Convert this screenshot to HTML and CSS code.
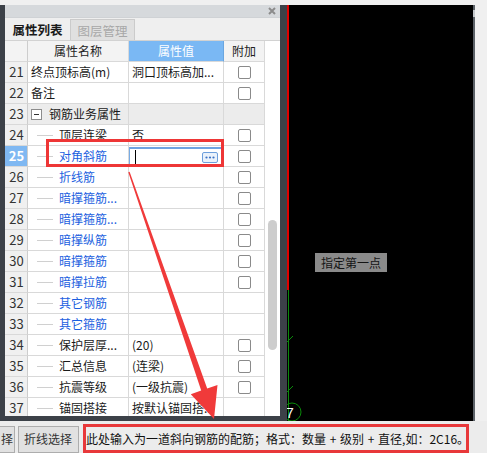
FILE: index.html
```html
<!DOCTYPE html>
<html>
<head>
<meta charset="utf-8">
<link rel="stylesheet" href="styles.css">
</head>
<body>
<div class="app">
  <div class="topstrip"></div>
  <div class="main">
    <div class="panel">
      <div class="titlebar">
        <svg class="close" width="8" height="8" viewBox="0 0 8 8"><path d="M1 1L7 7M7 1L1 7" stroke="#8c8c8c" stroke-width="2"/></svg>
      </div>
      <div class="tabs">
        <div class="tab active">属性列表</div>
        <div class="tab">图层管理</div>
      </div>
      <div class="body">
        <div class="grid">
          <div class="row hd">
            <div class="c num"></div>
            <div class="c hname">属性名称</div>
            <div class="c hval">属性值</div>
            <div class="c hadd">附加</div>
          </div>
          <div class="row">
            <div class="c num">21</div>
            <div class="c name">终点顶标高(m)</div>
            <div class="c val">洞口顶标高加...</div>
            <div class="c add"><span class="cb"></span></div>
          </div>
          <div class="row">
            <div class="c num">22</div>
            <div class="c name">备注</div>
            <div class="c val"></div>
            <div class="c add"><span class="cb"></span></div>
          </div>
          <div class="row grp">
            <div class="c num">23</div>
            <div class="c name"><span class="tog"></span>钢筋业务属性</div>
            <div class="c val"></div>
            <div class="c add"></div>
          </div>
          <div class="row">
            <div class="c num">24</div>
            <div class="c name"><span class="tree"></span>顶层连梁</div>
            <div class="c val">否</div>
            <div class="c add"><span class="cb"></span></div>
          </div>
          <div class="row">
            <div class="c num sel">25</div>
            <div class="c name blue"><span class="tree"></span>对角斜筋</div>
            <div class="c val editing">
              <div class="edit">
                <span class="caret"></span>
                <span class="dots"><svg width="14" height="9" viewBox="0 0 14 9"><circle cx="3.5" cy="4.5" r="1.1" fill="#3d72c4"/><circle cx="7" cy="4.5" r="1.1" fill="#3d72c4"/><circle cx="10.5" cy="4.5" r="1.1" fill="#3d72c4"/></svg></span>
              </div>
            </div>
            <div class="c add"><span class="cb"></span></div>
          </div>
          <div class="row">
            <div class="c num">26</div>
            <div class="c name blue"><span class="tree"></span>折线筋</div>
            <div class="c val"></div>
            <div class="c add"><span class="cb"></span></div>
          </div>
          <div class="row">
            <div class="c num">27</div>
            <div class="c name blue"><span class="tree"></span>暗撑箍筋...</div>
            <div class="c val"></div>
            <div class="c add"><span class="cb"></span></div>
          </div>
          <div class="row">
            <div class="c num">28</div>
            <div class="c name blue"><span class="tree"></span>暗撑箍筋...</div>
            <div class="c val"></div>
            <div class="c add"><span class="cb"></span></div>
          </div>
          <div class="row">
            <div class="c num">29</div>
            <div class="c name blue"><span class="tree"></span>暗撑纵筋</div>
            <div class="c val"></div>
            <div class="c add"><span class="cb"></span></div>
          </div>
          <div class="row">
            <div class="c num">30</div>
            <div class="c name blue"><span class="tree"></span>暗撑箍筋</div>
            <div class="c val"></div>
            <div class="c add"><span class="cb"></span></div>
          </div>
          <div class="row">
            <div class="c num">31</div>
            <div class="c name blue"><span class="tree"></span>暗撑拉筋</div>
            <div class="c val"></div>
            <div class="c add"><span class="cb"></span></div>
          </div>
          <div class="row">
            <div class="c num">32</div>
            <div class="c name blue"><span class="tree"></span>其它钢筋</div>
            <div class="c val"></div>
            <div class="c add"></div>
          </div>
          <div class="row">
            <div class="c num">33</div>
            <div class="c name blue"><span class="tree"></span>其它箍筋</div>
            <div class="c val"></div>
            <div class="c add"></div>
          </div>
          <div class="row">
            <div class="c num">34</div>
            <div class="c name"><span class="tree"></span>保护层厚...</div>
            <div class="c val">(20)</div>
            <div class="c add"><span class="cb"></span></div>
          </div>
          <div class="row">
            <div class="c num">35</div>
            <div class="c name"><span class="tree"></span>汇总信息</div>
            <div class="c val">(连梁)</div>
            <div class="c add"><span class="cb"></span></div>
          </div>
          <div class="row">
            <div class="c num">36</div>
            <div class="c name"><span class="tree"></span>抗震等级</div>
            <div class="c val">(一级抗震)</div>
            <div class="c add"><span class="cb"></span></div>
          </div>
          <div class="row">
            <div class="c num">37</div>
            <div class="c name"><span class="tree"></span>锚固搭接</div>
            <div class="c val">按默认锚固搭...</div>
            <div class="c add"></div>
          </div>
        </div>
        <div class="scroll"><div class="thumb"></div></div>
      </div>
    </div>
    <div class="canvas">
      <svg class="drawing" width="186" height="416" viewBox="0 0 186 416">
        <line x1="1" y1="0" x2="1" y2="285" stroke="#e00000" stroke-width="2"/>
        <line x1="1.5" y1="285" x2="1.5" y2="416" stroke="#0a8a0a" stroke-width="1"/>
        <line x1="0" y1="337" x2="6" y2="331" stroke="#0a8a0a" stroke-width="1"/>
        <line x1="0" y1="387" x2="6" y2="381" stroke="#0a8a0a" stroke-width="1"/>
        <circle cx="5" cy="407" r="9" fill="none" stroke="#0a8a0a" stroke-width="1"/>
        <text x="-1" y="413" fill="#ffffff" font-size="14" font-family="Liberation Sans, sans-serif">7</text>
      </svg>
      <div class="hint">指定第一点</div>
    </div>
    <div class="vscroll"><div class="vthumb"></div></div>
    <div class="rightstrip"></div>
  </div>
  <div class="status">
    <div class="btn cut">择</div>
    <div class="btn">折线选择</div>
    <div class="msg"><span class="msgtext">此处输入为一道斜向钢筋的配筋；格式：数量 + 级别 + 直径,如：2C16。</span></div>
  </div>
  <div class="highlight"></div>
  <svg class="arrow" width="487" height="453" viewBox="0 0 487 453">
    <polygon points="128.3,172.2 129.6,171.8 207.2,388.6 217.5,385 214,419 190.8,394.2 201.2,390.6" fill="#f03a3a"/>
  </svg>
</div>
</body>
</html>
```

FILE: styles.css
```css
html, body {
  margin: 0;
  padding: 0;
}
body {
  width: 487px;
  height: 453px;
  overflow: hidden;
  background: #f0f0f0;
  font-family: "Noto Sans CJK SC", "Microsoft YaHei", sans-serif;
  font-size: 12px;
  color: #1a1a1a;
}
.app {
  position: relative;
  width: 487px;
  height: 453px;
  overflow: hidden;
}
.topstrip {
  height: 5px;
  background: #f0f0f0;
}
.main {
  display: flex;
  height: 416px;
}
.panel {
  width: 275px;
  height: 411px;
  border-left: 5px solid #3c4148;
  border-right: 7px solid #3c4148;
  border-bottom: 5px solid #3c4148;
  display: flex;
  flex-direction: column;
  background: #fff;
  flex: none;
}
.titlebar {
  height: 12px;
  background: #d6d9dc;
  display: flex;
  justify-content: flex-end;
  align-items: center;
  padding-right: 4px;
  flex: none;
}
.close {
  display: block;
}
.tabs {
  height: 23px;
  box-sizing: border-box;
  background: #efefef;
  display: flex;
  align-items: flex-end;
  border-top: 1px solid #cfd2d5;
  flex: none;
}
.tab {
  width: 65px;
  height: 21px;
  box-sizing: border-box;
  display: flex;
  align-items: center;
  justify-content: center;
  font-size: 12.5px;
  color: #a8a8a8;
  background: #e0e0e0;
  border: 1px solid #cbcbcb;
  border-bottom: none;
}
.tab.active {
  height: 22px;
  background: #efefef;
  color: #1a1a1a;
  font-weight: bold;
  border: none;
}
.body {
  display: flex;
  flex: 1;
  overflow: hidden;
  border-top: 1px solid #d2d2d2;
}
.grid {
  width: 260px;
  flex: none;
}
.row {
  display: grid;
  grid-template-columns: 23px 101px 95px 41px;
  height: 21px;
}
.c {
  box-sizing: border-box;
  border-right: 1px solid #d9d9d9;
  border-bottom: 1px solid #d9d9d9;
  display: flex;
  align-items: center;
  overflow: hidden;
  white-space: nowrap;
  line-height: 20px;
}
.num {
  justify-content: center;
  background: #f0f0f0;
  font-size: 13px;
  color: #333;
  border-right-color: #cdcdcd;
  padding-left: 1px;
}
.num.sel {
  background: #7fb8f2;
  color: #fff;
  font-weight: bold;
}
.hd .c {
  justify-content: center;
  background: #f3f3f3;
  color: #222;
}
.hd .hval {
  background: #7ab8f4;
  color: #fff;
  border-right-color: #6aa6e0;
}
.name {
  padding-left: 3px;
}
.name.blue {
  color: #1c5fe0;
}
.val {
  padding-left: 3px;
}
.add {
  justify-content: center;
}
.cb {
  width: 13px;
  height: 13px;
  box-sizing: border-box;
  border: 1px solid #8a8a8a;
  border-radius: 2px;
  background: #fff;
  margin-left: 1px;
}
.grp .c {
  background: #ececec;
}
.grp .num {
  background: #f0f0f0;
}
.tog {
  width: 11px;
  height: 11px;
  box-sizing: border-box;
  border: 1px solid #8c8c8c;
  background: #fff;
  margin-right: 7px;
  display: flex;
  align-items: center;
  justify-content: center;
}
.tog::after {
  content: "";
  width: 5px;
  height: 1px;
  background: #333;
}
.tree {
  width: 16px;
  height: 1px;
  background: #d0d0d0;
  margin-left: 6px;
  margin-right: 6px;
  flex: none;
}
.val.editing {
  padding: 0;
  align-items: stretch;
}
.edit {
  flex: 1;
  margin: 1px 1px 0 0;
  box-sizing: border-box;
  border: 1px solid #78abe4;
  border-top: 2px solid #6fa4e2;
  display: flex;
  align-items: center;
  background: #fff;
}
.caret {
  width: 1px;
  height: 14px;
  background: #000;
  margin-left: 5px;
}
.dots {
  margin-left: auto;
  margin-right: 3px;
  width: 16px;
  height: 11px;
  box-sizing: border-box;
  border: 1px solid #6d9fdc;
  border-radius: 2px;
  background: #eaf2fb;
  display: flex;
  align-items: center;
  justify-content: center;
}
.dots svg {
  display: block;
}
.scroll {
  width: 15px;
  background: #fff;
  padding-top: 179px;
  box-sizing: border-box;
}
.thumb {
  width: 9px;
  height: 130px;
  margin-left: 3px;
  border-radius: 5px;
  background: #cdcdcd;
}
.canvas {
  width: 186px;
  background: #000;
  position: relative;
  flex: none;
  overflow: hidden;
}
.drawing {
  display: block;
  overflow: visible;
}
.hint {
  position: absolute;
  left: 28px;
  top: 248px;
  width: 72px;
  height: 19px;
  background: #8a8a8a;
  color: #141414;
  font-size: 12px;
  line-height: 19px;
  text-align: center;
}
.vscroll {
  width: 2px;
  background: #5c6268;
  flex: none;
  padding-top: 5px;
  box-sizing: border-box;
}
.vthumb {
  height: 7px;
  background: #c4c8cc;
}
.rightstrip {
  flex: 1;
  background: #f0f0f0;
}
.status {
  height: 32px;
  display: flex;
  align-items: flex-start;
  background: #ececec;
}
.btn {
  margin-top: 5px;
  height: 27px;
  box-sizing: border-box;
  border: 1px solid #adadad;
  background: #e1e1e1;
  line-height: 24px;
  padding: 0 6px 0 5px;
  color: #333;
  margin-right: 3px;
  flex: none;
}
.btn.cut {
  margin-left: -3px;
  padding: 0 1px 0 3px;
}
.btn + .btn {
  margin-right: 4px;
}
.msg {
  margin-top: 3px;
  width: 386px;
  height: 29px;
  box-sizing: border-box;
  border: 3px solid #e8383a;
  background: #ececec;
  display: flex;
  align-items: center;
  flex: none;
}
.msgtext {
  white-space: nowrap;
  color: #111;
  line-height: 16px;
  word-spacing: 1px;
}
.highlight {
  position: absolute;
  left: 46px;
  top: 139px;
  width: 178px;
  height: 28px;
  box-sizing: border-box;
  border: 3px solid #ee3636;
}
.arrow {
  position: absolute;
  left: 0;
  top: 0;
  pointer-events: none;
}
```
